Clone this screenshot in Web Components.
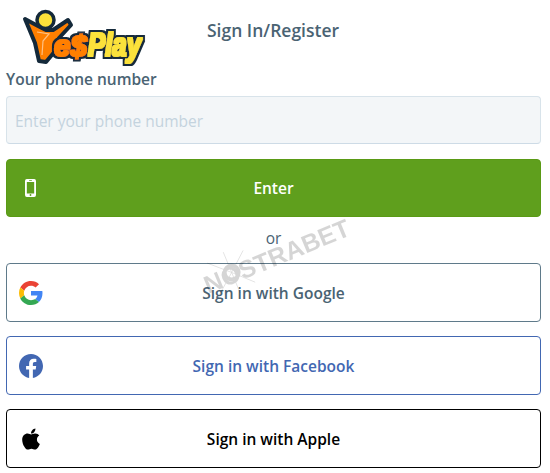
<!DOCTYPE html>
<html>
<head>
<meta charset="utf-8">
<style>
    html, body { margin: 0; background: #fff; }
    body { font-family: "Open Sans", "Noto Sans", sans-serif; color: #4a6373; }
</style>
</head>
<body>
<login-page>
    <site-header slot="header" title="Sign In/Register"></site-header>
    <phone-field label="Your phone number" placeholder="Enter your phone number"></phone-field>
    <auth-button kind="enter" label="Enter">
        <svg slot="icon" width="11" height="18" viewBox="0 0 12 18" preserveAspectRatio="none"><path fill="#fff" fill-rule="evenodd" d="M2 0h8a2 2 0 0 1 2 2v14a2 2 0 0 1-2 2H2a2 2 0 0 1-2-2V2a2 2 0 0 1 2-2zM2 3v11.500h8V3zM4.500 1.200v.7h3v-.7zM6 15a1 1 0 1 0 0 2 1 1 0 0 0 0-2z"/></svg>
    </auth-button>
    <or-divider>or</or-divider>
    <auth-button kind="google" label="Sign in with Google">
        <svg slot="icon" width="24" height="24" viewBox="0 0 48 48">
            <path fill="#EA4335" d="M24 9.500c3.540 0 6.710 1.220 9.210 3.600l6.850-6.850C35.900 2.380 30.470 0 24 0 14.620 0 6.510 5.380 2.560 13.220l7.980 6.190C12.430 13.720 17.740 9.500 24 9.500z"/>
            <path fill="#4285F4" d="M46.980 24.550c0-1.570-.15-3.090-.38-4.550H24v9.020h12.940c-.58 2.960-2.260 5.480-4.780 7.180l7.730 6c4.510-4.180 7.090-10.360 7.090-17.650z"/>
            <path fill="#FBBC05" d="M10.530 28.590c-.48-1.450-.76-2.990-.76-4.590s.27-3.140.76-4.590l-7.980-6.190C.92 16.460 0 20.120 0 24c0 3.880.92 7.540 2.560 10.780l7.970-6.190z"/>
            <path fill="#34A853" d="M24 48c6.480 0 11.930-2.130 15.890-5.810l-7.730-6c-2.150 1.450-4.920 2.300-8.160 2.300-6.260 0-11.570-4.220-13.470-9.910l-7.980 6.190C6.510 42.620 14.620 48 24 48z"/>
        </svg>
    </auth-button>
    <auth-button kind="facebook" label="Sign in with Facebook">
        <svg slot="icon" width="24" height="24" viewBox="0 0 24 24"><path fill="#4267b2" d="M24 12.070C24 5.400 18.630 0 12 0S0 5.400 0 12.070c0 6.030 4.390 11.020 10.130 11.930v-8.440H7.080v-3.490h3.050V9.410c0-3.020 1.790-4.690 4.530-4.690 1.310 0 2.680.23 2.680.23v2.970h-1.510c-1.490 0-1.960.93-1.960 1.880v2.270h3.330l-.53 3.490h-2.800V24C19.610 23.090 24 18.100 24 12.070z"/></svg>
    </auth-button>
    <auth-button kind="apple" label="Sign in with Apple">
        <svg slot="icon" width="22" height="24" viewBox="0 0 384 512"><path fill="#000" d="M318.700 268.700c-.2-36.700 16.400-64.400 50-84.800-18.800-26.900-47.200-41.700-84.700-44.600-35.500-2.800-74.300 20.700-88.500 20.700-15 0-49.400-19.700-76.400-19.700C63.300 141.200 4 184.800 4 273.500q0 39.300 14.400 81.200c12.800 36.700 59 126.700 107.200 125.200 25.200-.6 43-17.900 75.800-17.900 31.800 0 48.300 17.900 76.400 17.900 48.600-.7 90.400-82.500 102.600-119.300-65.200-30.700-61.700-90-61.700-91.900zm-56.600-164.200c27.300-32.400 24.800-61.900 24-72.500-24.100 1.400-52 16.400-67.900 34.900-17.500 19.800-27.800 44.300-25.600 71.900 26.100 2 49.900-11.400 69.500-34.300z"/></svg>
    </auth-button>
    <water-mark slot="overlay">NOSTRABET</water-mark>
</login-page>

<script>
class LoginPage extends HTMLElement {
    connectedCallback() {
        this.attachShadow({ mode: 'open' });
        this.shadowRoot.innerHTML = `
            <style>
                :host { display: block; position: relative; width: 550px; height: 473px; overflow: hidden; box-sizing: border-box; padding: 0 9px 0 6px; }
                .stack { display: flex; flex-direction: column; }
            </style>
            <slot name="header"></slot>
            <div class="stack"><slot></slot></div>
            <slot name="overlay"></slot>
        `;
    }
}

class SiteHeader extends HTMLElement {
    connectedCallback() {
        this.attachShadow({ mode: 'open' });
        this.shadowRoot.innerHTML = `
            <style>
                :host { display: flex; height: 69px; align-items: flex-start; }
                svg { display: block; margin: 7px 0 0 12px; flex: none; }
                h1 { margin: 17px 0 0 41px; font-size: 17.500px; line-height: 26px; font-weight: 600; color: #4a6373; white-space: nowrap; }
                text { font-family: "Liberation Sans", sans-serif; font-weight: 700; font-style: italic; }
            </style>
            <svg width="148" height="62" viewBox="0 0 148 62">
                <defs>
                    <!-- fattens the letters and puts the dark outline under them -->
                    <filter id="fat" x="-15%" y="-25%" width="130%" height="150%">
                        <feMorphology in="SourceGraphic" operator="dilate" radius=".6" result="fill"/>
                        <feMorphology in="SourceAlpha" operator="dilate" radius="3" result="grown"/>
                        <feFlood flood-color="#14293a"/>
                        <feComposite in2="grown" operator="in" result="line"/>
                        <feMerge><feMergeNode in="line"/><feMergeNode in="fill"/></feMerge>
                    </filter>
                </defs>
                <!-- the running figure is the Y of the logo -->
                <path d="M7 12 L20 19 L28 23 L35 23 L50 13 L53 18 L41 31 L38 43 L28 55 L21 54 L17 36 Z" fill="#ff7f00" stroke="#14293a" stroke-width="4" stroke-linejoin="round"/>
                <path d="M19 25 L31 27 L25 34 L24 48" fill="none" stroke="#ffc183" stroke-width="1.200"/>
                <circle cx="27.500" cy="13" r="8.500" fill="#fbe23a" stroke="#14293a" stroke-width="3.500"/>
                <g filter="url(#fat)">
                    <text x="36" y="49" font-size="29" fill="#ff7f00" textLength="33" lengthAdjust="spacingAndGlyphs">e$</text>
                    <text x="70" y="49" font-size="33" fill="#fbe23a" textLength="53" lengthAdjust="spacingAndGlyphs">Play</text>
                </g>
            </svg>
            <h1>${this.getAttribute('title')}</h1>
        `;
    }
}

class PhoneField extends HTMLElement {
    connectedCallback() {
        this.attachShadow({ mode: 'open' });
        this.shadowRoot.innerHTML = `
            <style>
                :host { display: block; }
                label { display: block; font-size: 15.500px; line-height: 20px; font-weight: 600; color: #4a6373; margin-bottom: 7px; }
                input { display: block; box-sizing: border-box; width: 100%; height: 48px; padding: 1px 8px 0; border: 1px solid #d8e3ea; border-bottom-color: #cddbe6; border-radius: 4px; background: #f3f6f8; font: 15.500px "Open Sans", "Noto Sans", sans-serif; outline: none; }
                input::placeholder { color: #c4d3de; opacity: 1; }
            </style>
            <label>${this.getAttribute('label')}</label>
            <input type="text" placeholder="${this.getAttribute('placeholder')}">
        `;
    }
}

class AuthButton extends HTMLElement {
    connectedCallback() {
        this.attachShadow({ mode: 'open' });
        this.shadowRoot.innerHTML = `
            <style>
                :host { display: block; margin-bottom: 14px; }
                :host([kind="enter"]) { margin: 15px 0 0; }
                .btn { box-sizing: border-box; height: 59px; display: grid; grid-template-columns: 47px 1fr 47px; align-items: center; border: 1px solid; border-radius: 4px; font-size: 15.500px; font-weight: 600; text-align: center; background: #fff; }
                .icon { display: flex; justify-content: center; }
                .icon ::slotted(svg) { display: block; }
                :host([kind="enter"]) .btn { height: 58px; background: #5f9f1d; border-color: #5a9a15; color: #fff; }
                :host([kind="google"]) .btn { border-color: #5f7a8a; color: #4a6373; }
                :host([kind="facebook"]) .btn { border-color: #4267b2; color: #4267b2; }
                :host([kind="apple"]) .btn { border-color: #000; color: #000; }
            </style>
            <div class="btn">
                <span class="icon"><slot name="icon"></slot></span>
                <span>${this.getAttribute('label')}</span>
            </div>
        `;
    }
}

class OrDivider extends HTMLElement {
    connectedCallback() {
        this.attachShadow({ mode: 'open' });
        this.shadowRoot.innerHTML = `
            <style>
                :host { display: block; height: 46px; line-height: 42px; text-align: center; font-size: 15.500px; color: #4a6373; }
            </style>
            <slot></slot>
        `;
    }
}

// the grey stamp that lies over the form
class WaterMark extends HTMLElement {
    connectedCallback() {
        this.attachShadow({ mode: 'open' });
        this.shadowRoot.innerHTML = `
            <style>
                :host { position: absolute; left: 199px; top: 242px; transform: rotate(-22.500deg); font: 700 25px "Liberation Sans", sans-serif; color: #000; opacity: .16; pointer-events: none; }
                svg { position: absolute; left: 8px; top: -12px; }
            </style>
            <svg width="44" height="48" viewBox="0 0 44 48" fill="none" stroke="#000" stroke-width=".6">
                <path d="M22 24 L3 6 M22 24 L41 8 M22 24 L2 40 M22 24 L40 42 M22 2 L22 46"/>
                <circle cx="22" cy="24" r="7" stroke-width="4"/>
            </svg>
            <slot></slot>
        `;
    }
}

customElements.define('login-page', LoginPage);
customElements.define('site-header', SiteHeader);
customElements.define('phone-field', PhoneField);
customElements.define('auth-button', AuthButton);
customElements.define('or-divider', OrDivider);
customElements.define('water-mark', WaterMark);
</script>
</body>
</html>
